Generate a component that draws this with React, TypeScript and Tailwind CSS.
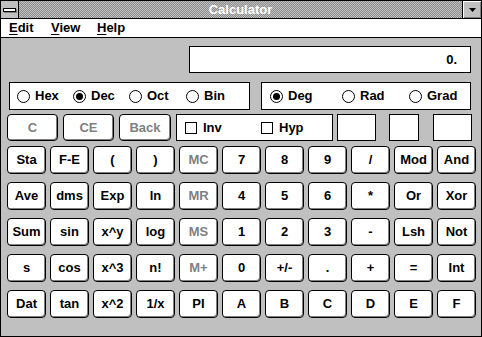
import React from 'react';

const font = { fontFamily: '"Liberation Sans", Arial, sans-serif' };

function Btn({ label, gray = false, w = 'w-[39px]' }: { label: string; gray?: boolean; w?: string }) {
  return (
    <div
      className={`${w} h-[28px] flex items-center justify-center bg-white border border-black rounded-[4px] shadow-[inset_-1px_-1px_0_#808080] text-[13px] font-bold ${gray ? 'text-[#808080]' : 'text-black'}`}
    >
      {label}
    </div>
  );
}

function Radio({ label, on = false, w }: { label: string; on?: boolean; w: string }) {
  return (
    <div className={`${w} flex items-center gap-[5px]`}>
      <span className="w-[13px] h-[13px] rounded-full border border-black bg-white flex items-center justify-center">
        {on && <span className="w-[7px] h-[7px] rounded-full bg-black" />}
      </span>
      <span className="text-[13px] font-bold">{label}</span>
    </div>
  );
}

function Check({ label, w }: { label: string; w: string }) {
  return (
    <div className={`${w} flex items-center gap-[6px]`}>
      <span className="w-[12px] h-[12px] border border-black bg-white" />
      <span className="text-[13px] font-bold">{label}</span>
    </div>
  );
}

const rows: [string, boolean?][][] = [
  [['Sta'], ['F-E'], ['('], [')'], ['MC', true], ['7'], ['8'], ['9'], ['/'], ['Mod'], ['And']],
  [['Ave'], ['dms'], ['Exp'], ['ln'], ['MR', true], ['4'], ['5'], ['6'], ['*'], ['Or'], ['Xor']],
  [['Sum'], ['sin'], ['x^y'], ['log'], ['MS', true], ['1'], ['2'], ['3'], ['-'], ['Lsh'], ['Not']],
  [['s'], ['cos'], ['x^3'], ['n!'], ['M+', true], ['0'], ['+/-'], ['.'], ['+'], ['='], ['Int']],
  [['Dat'], ['tan'], ['x^2'], ['1/x'], ['PI'], ['A'], ['B'], ['C'], ['D'], ['E'], ['F']],
];

export default function App() {
  return (
    <div style={font} className="w-[482px] h-[337px] border border-black flex flex-col text-black overflow-hidden">
      {/* Title bar */}
      <div className="h-[18px] flex border-b border-black shrink-0">
        <div className="w-[18px] bg-[#c0c0c0] border-r border-black flex items-center justify-center">
          <div className="w-[13px] h-[4px] bg-white border border-black shadow-[1px_1px_0_#808080]" />
        </div>
        <div className="flex-1 flex items-center justify-center bg-[repeating-conic-gradient(#8c8c8c_0_25%,#c0c0c0_0_50%)] bg-[length:2px_2px]">
          <span className="text-white text-[13px] font-bold leading-none">Calculator</span>
        </div>
        <div className="w-[19px] bg-[#c0c0c0] border-l border-black flex items-center justify-center shadow-[inset_1px_1px_0_#fff,inset_-1px_-1px_0_#808080]">
          <svg width="7" height="4" viewBox="0 0 7 4">
            <path d="M0 0h7L3.5 4z" fill="#000" />
          </svg>
        </div>
      </div>

      {/* Menu bar */}
      <div className="h-[19px] bg-white border-b border-black flex items-center text-[13px] font-bold shrink-0 pl-[8px]">
        <span className="w-[42px]"><span className="underline underline-offset-2">E</span>dit</span>
        <span className="w-[46px]"><span className="underline underline-offset-2">V</span>iew</span>
        <span><span className="underline underline-offset-2">H</span>elp</span>
      </div>

      {/* Body */}
      <div className="flex-1 bg-[#c0c0c0] pt-[8px]">
        <div className="ml-[188px] w-[282px] h-[27px] bg-white border border-black flex items-center justify-end pr-[13px] text-[13px] font-bold">
          0.
        </div>

        <div className="mt-[9px] flex">
          <div className="ml-[8px] w-[241px] h-[28px] bg-white border border-black flex items-center pl-[7px]">
            <Radio label="Hex" w="w-[56px]" />
            <Radio label="Dec" on w="w-[56px]" />
            <Radio label="Oct" w="w-[57px]" />
            <Radio label="Bin" w="w-[50px]" />
          </div>
          <div className="ml-[11px] w-[210px] h-[28px] bg-white border border-black flex items-center pl-[8px]">
            <Radio label="Deg" on w="w-[72px]" />
            <Radio label="Rad" w="w-[67px]" />
            <Radio label="Grad" w="w-[55px]" />
          </div>
        </div>

        <div className="mt-[4px] ml-[6px] flex items-center h-[27px]">
          <div className="flex gap-[5px]">
            <Btn label="C" gray w="w-[51px] !h-[27px]" />
            <Btn label="CE" gray w="w-[51px] !h-[27px]" />
            <Btn label="Back" gray w="w-[52px] !h-[27px]" />
          </div>
          <div className="ml-[5px] w-[157px] h-[27px] bg-white border border-black flex items-center pl-[8px]">
            <Check label="Inv" w="w-[76px]" />
            <Check label="Hyp" w="w-[60px]" />
          </div>
          <div className="ml-[4px] w-[39px] h-[27px] bg-white border border-black" />
          <div className="ml-[13px] w-[30px] h-[27px] bg-white border border-black" />
          <div className="ml-[14px] w-[39px] h-[27px] bg-white border border-black" />
        </div>

        <div className="mt-[5px] ml-[6px] grid grid-cols-[repeat(11,39px)] gap-x-[4px] gap-y-[8px]">
          {rows.flat().map(([label, gray], i) => (
            <Btn key={i} label={label} gray={gray} />
          ))}
        </div>
      </div>
    </div>
  );
}
